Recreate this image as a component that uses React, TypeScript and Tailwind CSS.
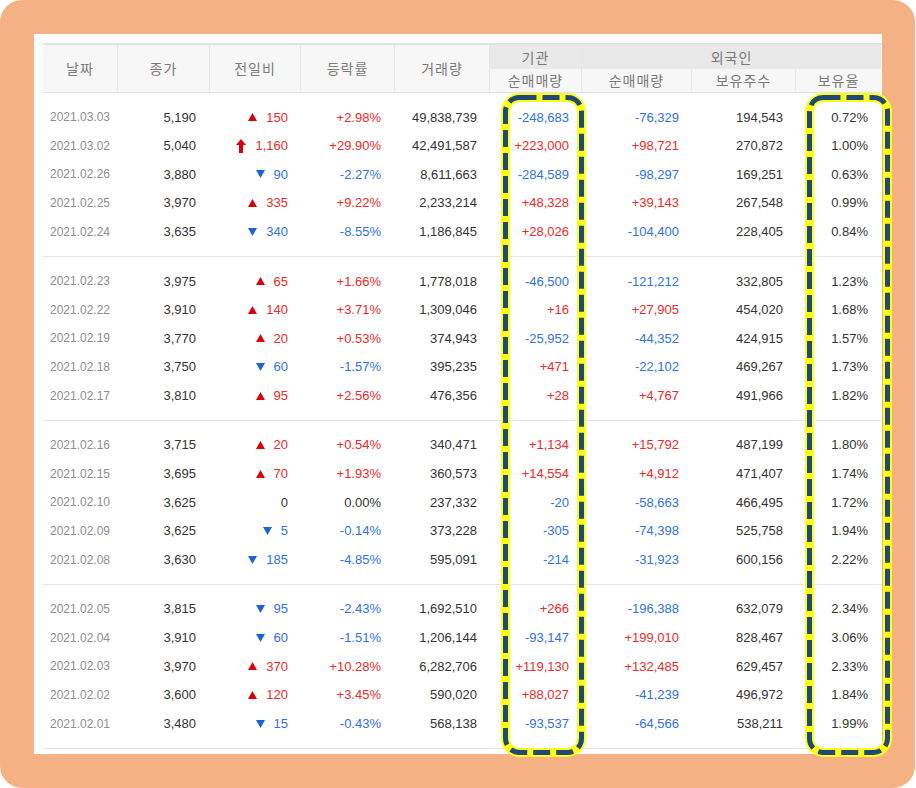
type Dir = "up" | "upper" | "down" | "none";

interface Row {
  date: string;
  close: string;
  dir: Dir;
  diff: string;
  rate: string;
  volume: string;
  inst: string;
  foreign: string;
  shares: string;
  ratio: string;
}

const r = (line: string): Row => {
  const [date, close, dir, diff, rate, volume, inst, foreign, shares, ratio] = line.split(" ");
  return { date, close, dir: dir as Dir, diff, rate, volume, inst, foreign, shares, ratio };
};

const groups: Row[][] = [
  [
    r("2021.03.03 5,190 up 150 +2.98% 49,838,739 -248,683 -76,329 194,543 0.72%"),
    r("2021.03.02 5,040 upper 1,160 +29.90% 42,491,587 +223,000 +98,721 270,872 1.00%"),
    r("2021.02.26 3,880 down 90 -2.27% 8,611,663 -284,589 -98,297 169,251 0.63%"),
    r("2021.02.25 3,970 up 335 +9.22% 2,233,214 +48,328 +39,143 267,548 0.99%"),
    r("2021.02.24 3,635 down 340 -8.55% 1,186,845 +28,026 -104,400 228,405 0.84%"),
  ],
  [
    r("2021.02.23 3,975 up 65 +1.66% 1,778,018 -46,500 -121,212 332,805 1.23%"),
    r("2021.02.22 3,910 up 140 +3.71% 1,309,046 +16 +27,905 454,020 1.68%"),
    r("2021.02.19 3,770 up 20 +0.53% 374,943 -25,952 -44,352 424,915 1.57%"),
    r("2021.02.18 3,750 down 60 -1.57% 395,235 +471 -22,102 469,267 1.73%"),
    r("2021.02.17 3,810 up 95 +2.56% 476,356 +28 +4,767 491,966 1.82%"),
  ],
  [
    r("2021.02.16 3,715 up 20 +0.54% 340,471 +1,134 +15,792 487,199 1.80%"),
    r("2021.02.15 3,695 up 70 +1.93% 360,573 +14,554 +4,912 471,407 1.74%"),
    r("2021.02.10 3,625 none 0 0.00% 237,332 -20 -58,663 466,495 1.72%"),
    r("2021.02.09 3,625 down 5 -0.14% 373,228 -305 -74,398 525,758 1.94%"),
    r("2021.02.08 3,630 down 185 -4.85% 595,091 -214 -31,923 600,156 2.22%"),
  ],
  [
    r("2021.02.05 3,815 down 95 -2.43% 1,692,510 +266 -196,388 632,079 2.34%"),
    r("2021.02.04 3,910 down 60 -1.51% 1,206,144 -93,147 +199,010 828,467 3.06%"),
    r("2021.02.03 3,970 up 370 +10.28% 6,282,706 +119,130 +132,485 629,457 2.33%"),
    r("2021.02.02 3,600 up 120 +3.45% 590,020 +88,027 -41,239 496,972 1.84%"),
    r("2021.02.01 3,480 down 15 -0.43% 568,138 -93,537 -64,566 538,211 1.99%"),
  ],
];

const cols = "grid grid-cols-[74px_92px_91px_94px_95px_92px_110px_104px_86px]";

function signColor(v: string) {
  if (v.startsWith("+")) return "text-[#ee2a2a]";
  if (v.startsWith("-")) return "text-[#3271e6]";
  return "text-[#333]";
}

function DirIcon({ dir }: { dir: Dir }) {
  if (dir === "up")
    return (
      <svg width="9" height="8" viewBox="0 0 9 8">
        <polygon points="4.5,0 9,8 0,8" fill="#d9000d" />
      </svg>
    );
  if (dir === "down")
    return (
      <svg width="9" height="8" viewBox="0 0 9 8">
        <polygon points="0,0 9,0 4.5,8" fill="#1f62d8" />
      </svg>
    );
  if (dir === "upper")
    return (
      <svg width="10" height="14" viewBox="0 0 10 14">
        <polygon points="5,0 10,6 7,6 7,14 3,14 3,6 0,6" fill="#d9000d" />
      </svg>
    );
  return null;
}

function DataRow({ row }: { row: Row }) {
  const diffColor =
    row.dir === "down" ? "text-[#3271e6]" : row.dir === "none" ? "text-[#333]" : "text-[#ee2a2a]";
  return (
    <div className={`${cols} h-[28.6px] items-center text-[13px] text-[#333]`}>
      <span className="text-center text-[12px] text-[#8e8e8e]">{row.date}</span>
      <span className="pr-[13px] text-right">{row.close}</span>
      <span className={`flex items-center justify-end gap-[9px] pr-[12px] ${diffColor}`}>
        <DirIcon dir={row.dir} />
        {row.diff}
      </span>
      <span className={`pr-[13px] text-right ${signColor(row.rate)}`}>{row.rate}</span>
      <span className="pr-[12px] text-right">{row.volume}</span>
      <span className={`pr-[12px] text-right ${signColor(row.inst)}`}>{row.inst}</span>
      <span className={`pr-[12px] text-right ${signColor(row.foreign)}`}>{row.foreign}</span>
      <span className="pr-[12px] text-right">{row.shares}</span>
      <span className="pr-[13px] text-right">{row.ratio}</span>
    </div>
  );
}

function Highlight({ className, w, h }: { className: string; w: number; h: number }) {
  return (
    <svg className={`pointer-events-none absolute ${className}`} width={w} height={h}>
      <rect x="4.5" y="4.5" width={w - 9} height={h - 9} rx="14" fill="none" stroke="#ffff1a" strokeWidth="9" />
      <rect
        x="4.5"
        y="4.5"
        width={w - 9}
        height={h - 9}
        rx="14"
        fill="none"
        stroke="#1f4a78"
        strokeWidth="5"
        strokeDasharray="17 6"
      />
    </svg>
  );
}

export default function App() {
  const head = "flex items-center justify-center text-[14px] tracking-[1px] text-[#7a7a7a]";
  return (
    <div className="h-[788px] w-[916px] bg-white font-['Liberation_Sans',sans-serif]">
      <div className="relative h-[788px] w-[915px] rounded-[22px] bg-[#f4b183] pl-[34px] pt-[34px]">
        <div className="h-[720px] w-[848px] overflow-hidden bg-white pl-[9px] pt-[9px]">
          {/* Header */}
          <div
            className={`${cols} grid-rows-[24px_23px] border-t-2 border-b border-[#e2e2e2] bg-[#f7f7f7] font-['Noto_Sans_CJK_KR',sans-serif]`}
          >
            <div className={`${head} row-span-2`}>날짜</div>
            <div className={`${head} row-span-2 border-l border-[#e6e6e6]`}>종가</div>
            <div className={`${head} row-span-2 border-l border-[#e6e6e6]`}>전일비</div>
            <div className={`${head} row-span-2 border-l border-[#e6e6e6]`}>등락률</div>
            <div className={`${head} row-span-2 border-l border-[#e6e6e6]`}>거래량</div>
            <div className={`${head} border-l border-[#e6e6e6] bg-[#e9e9e9]`}>기관</div>
            <div className={`${head} col-span-3 border-l border-[#e6e6e6] bg-[#e9e9e9]`}>외국인</div>
            <div className={`${head} border-l border-[#e6e6e6]`}>순매매량</div>
            <div className={`${head} border-l border-[#e6e6e6]`}>순매매량</div>
            <div className={`${head} border-l border-[#e6e6e6]`}>보유주수</div>
            <div className={`${head} border-l border-[#e6e6e6]`}>보유율</div>
          </div>

          {/* Body */}
          {groups.map((g, i) => (
            <div key={i} className="border-b border-[#e4e4e4] pt-[10px] pb-[10px]">
              {g.map((row) => (
                <DataRow key={row.date} row={row} />
              ))}
            </div>
          ))}
        </div>

        <Highlight className="left-[501px] top-[93px]" w={85} h={664} />
        <Highlight className="left-[805px] top-[93px]" w={87} h={664} />
      </div>
    </div>
  );
}
